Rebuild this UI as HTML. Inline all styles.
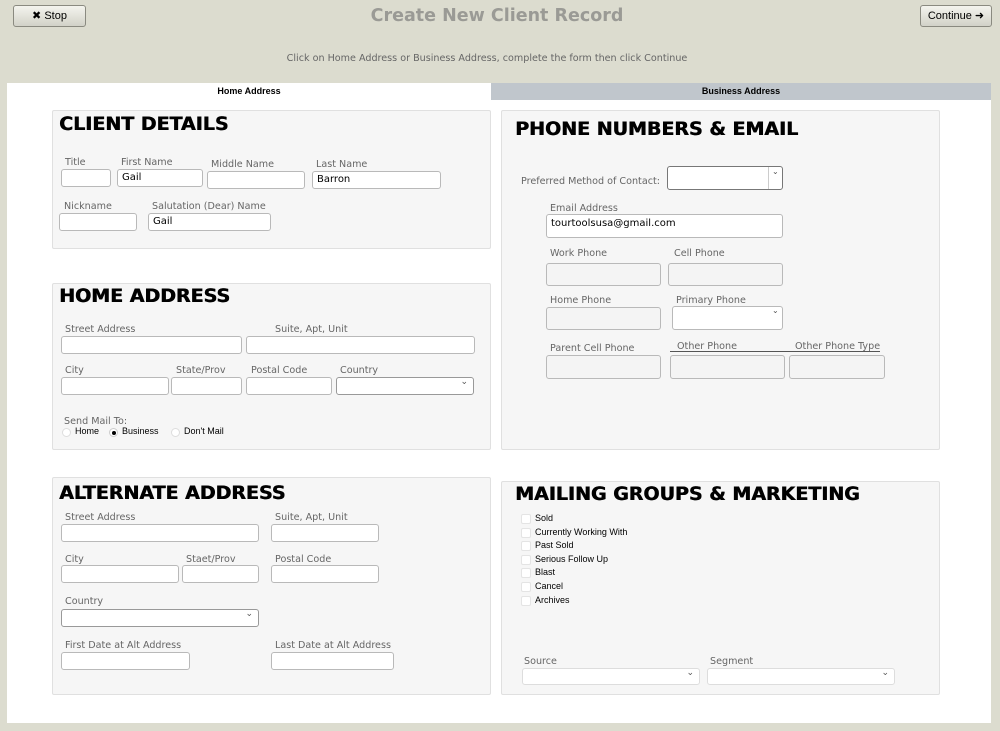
<!DOCTYPE html>
<html><head><meta charset="utf-8"><style>
*{box-sizing:border-box;margin:0;padding:0}
body{width:1000px;height:731px;background:#dcdccf;position:relative;overflow:hidden;font-family:"DejaVu Sans","Liberation Sans",sans-serif}
div,span{position:absolute}
.btn{border:1px solid #8a8a80;border-radius:3px;background:linear-gradient(#f4f4ee,#d2d2c8);font:11px "Liberation Sans",sans-serif;color:#000;text-align:center;line-height:20px}
.wh{left:7px;top:83px;width:984px;height:640px;background:#fff}
.tab2{left:491px;top:83px;width:500px;height:17px;background:#c0c6cc;font:bold 9px "Liberation Sans",sans-serif;text-align:center;line-height:17px}
.tab1{left:7px;top:83px;width:484px;height:17px;font:bold 9px "Liberation Sans",sans-serif;text-align:center;line-height:17px}
.p{background:#f6f6f6;border:1px solid #e0e0e0;border-radius:2px}
.h{font:bold 19px "DejaVu Sans",sans-serif;color:#000;white-space:nowrap;margin-top:1px;text-shadow:0.6px 0 0 #000}
.l{font-size:9.6px;color:#666;white-space:nowrap;margin-top:3px}
.i{background:#fff;border:1px solid #b9b9b9;border-radius:3px;font:10px "DejaVu Sans",sans-serif;color:#000;padding-left:4px;line-height:16px}
.g{background:#f4f4f4}
.s::after{content:"\2304";position:absolute;right:5px;top:-4px;font-size:9px;color:#555}
.c{font:9px "Liberation Sans",sans-serif;color:#000;white-space:nowrap}
.cb{width:10px;height:10px;background:#fff;border:1px solid #e4e4e4;border-radius:2px}
.r{width:9px;height:9px;border-radius:50%;background:#fff;border:1px solid #ddd}
</style></head><body>
<div class="btn" style="left:13px;top:5px;width:73px;height:22px">✖ Stop</div>
<div class="btn" style="left:920px;top:5px;width:72px;height:22px">Continue ➜</div>
<div style="left:300px;top:6px;width:394px;text-align:center;font:bold 17.5px 'DejaVu Sans',sans-serif;color:#9a9a95">Create New Client Record</div>
<div style="left:200px;top:53px;width:574px;text-align:center;font-size:9.6px;color:#666">Click on Home Address or Business Address, complete the form then click Continue</div>
<div class="wh"></div>
<div class="tab1">Home Address</div>
<div class="tab2">Business Address</div>

<!-- client details -->
<div class="p" style="left:52px;top:110px;width:439px;height:139px"></div>
<div class="h" style="left:59px;top:112px">CLIENT DETAILS</div>
<div class="l" style="left:65px;top:154px">Title</div>
<div class="l" style="left:121px;top:154px">First Name</div>
<div class="l" style="left:211px;top:156px">Middle Name</div>
<div class="l" style="left:316px;top:156px">Last Name</div>
<div class="i" style="left:61px;top:169px;width:50px;height:18px"></div>
<div class="i" style="left:117px;top:169px;width:86px;height:18px">Gail</div>
<div class="i" style="left:207px;top:171px;width:98px;height:18px"></div>
<div class="i" style="left:312px;top:171px;width:129px;height:18px">Barron</div>
<div class="l" style="left:64px;top:198px">Nickname</div>
<div class="l" style="left:152px;top:198px">Salutation (Dear) Name</div>
<div class="i" style="left:59px;top:213px;width:78px;height:18px"></div>
<div class="i" style="left:148px;top:213px;width:123px;height:18px">Gail</div>

<!-- home address -->
<div class="p" style="left:52px;top:283px;width:439px;height:167px"></div>
<div class="h" style="left:59px;top:284px">HOME ADDRESS</div>
<div class="l" style="left:65px;top:321px">Street Address</div>
<div class="l" style="left:275px;top:321px">Suite, Apt, Unit</div>
<div class="i" style="left:61px;top:336px;width:181px;height:18px"></div>
<div class="i" style="left:246px;top:336px;width:229px;height:18px"></div>
<div class="l" style="left:65px;top:362px">City</div>
<div class="l" style="left:176px;top:362px">State/Prov</div>
<div class="l" style="left:251px;top:362px">Postal Code</div>
<div class="l" style="left:340px;top:362px">Country</div>
<div class="i" style="left:61px;top:377px;width:108px;height:18px"></div>
<div class="i" style="left:171px;top:377px;width:71px;height:18px"></div>
<div class="i" style="left:246px;top:377px;width:86px;height:18px"></div>
<div class="i s" style="left:336px;top:377px;width:138px;height:18px;border-color:#999"></div>
<div class="l" style="left:64px;top:413px">Send Mail To:</div>
<div class="r" style="left:62px;top:428px"></div><div class="c" style="left:75px;top:426px">Home</div>
<div class="r" style="left:109px;top:428px;border-color:#ccc"></div><div style="left:112px;top:431px;width:4px;height:4px;border-radius:50%;background:#000"></div><div class="c" style="left:122px;top:426px">Business</div>
<div class="r" style="left:171px;top:428px"></div><div class="c" style="left:184px;top:426px">Don't Mail</div>

<!-- alternate -->
<div class="p" style="left:52px;top:477px;width:439px;height:218px"></div>
<div class="h" style="left:59px;top:481px">ALTERNATE ADDRESS</div>
<div class="l" style="left:65px;top:509px">Street Address</div>
<div class="l" style="left:275px;top:509px">Suite, Apt, Unit</div>
<div class="i" style="left:61px;top:524px;width:198px;height:18px"></div>
<div class="i" style="left:271px;top:524px;width:108px;height:18px"></div>
<div class="l" style="left:65px;top:551px">City</div>
<div class="l" style="left:186px;top:551px">Staet/Prov</div>
<div class="l" style="left:275px;top:551px">Postal Code</div>
<div class="i" style="left:61px;top:565px;width:118px;height:18px"></div>
<div class="i" style="left:182px;top:565px;width:77px;height:18px"></div>
<div class="i" style="left:271px;top:565px;width:108px;height:18px"></div>
<div class="l" style="left:65px;top:593px">Country</div>
<div class="i s" style="left:61px;top:609px;width:198px;height:18px;border-color:#999"></div>
<div class="l" style="left:65px;top:637px">First Date at Alt Address</div>
<div class="l" style="left:275px;top:637px">Last Date at Alt Address</div>
<div class="i" style="left:61px;top:652px;width:129px;height:18px"></div>
<div class="i" style="left:271px;top:652px;width:123px;height:18px"></div>

<!-- phone -->
<div class="p" style="left:501px;top:110px;width:439px;height:340px"></div>
<div class="h" style="left:515px;top:117px">PHONE NUMBERS &amp; EMAIL</div>
<div class="l" style="left:521px;top:173px">Preferred Method of Contact:</div>
<div class="i" style="left:667px;top:166px;width:116px;height:24px;border-color:#777"></div>
<div style="left:768px;top:167px;width:1px;height:22px;background:#ccc"></div>
<div style="left:772px;top:167px;font-size:8px;color:#555">⌄</div>
<div class="l" style="left:550px;top:200px">Email Address</div>
<div class="i" style="left:546px;top:214px;width:237px;height:24px;line-height:17px;font-size:10px">tourtoolsusa@gmail.com</div>
<div class="l" style="left:550px;top:245px">Work Phone</div>
<div class="l" style="left:674px;top:245px">Cell Phone</div>
<div class="i g" style="left:546px;top:263px;width:115px;height:23px"></div>
<div class="i g" style="left:668px;top:263px;width:115px;height:23px"></div>
<div class="l" style="left:550px;top:292px">Home Phone</div>
<div class="l" style="left:676px;top:292px">Primary Phone</div>
<div class="i g" style="left:546px;top:307px;width:115px;height:23px"></div>
<div class="i" style="left:672px;top:306px;width:111px;height:24px"></div>
<div style="left:772px;top:306px;font-size:8px;color:#555">⌄</div>
<div class="l" style="left:550px;top:340px">Parent Cell Phone</div>
<div class="l" style="left:677px;top:338px">Other Phone</div>
<div class="l" style="left:795px;top:338px">Other Phone Type</div>
<div style="left:670px;top:351px;width:210px;height:1px;background:#555"></div>
<div class="i g" style="left:546px;top:355px;width:115px;height:24px"></div>
<div class="i g" style="left:670px;top:355px;width:115px;height:24px"></div>
<div class="i g" style="left:789px;top:355px;width:96px;height:24px"></div>

<!-- mailing -->
<div class="p" style="left:501px;top:481px;width:439px;height:214px"></div>
<div class="h" style="left:515px;top:482px">MAILING GROUPS &amp; MARKETING</div>
<div class="cb" style="left:521px;top:514px"></div><div class="c" style="left:535px;top:513px">Sold</div>
<div class="cb" style="left:521px;top:528px"></div><div class="c" style="left:535px;top:527px">Currently Working With</div>
<div class="cb" style="left:521px;top:541px"></div><div class="c" style="left:535px;top:540px">Past Sold</div>
<div class="cb" style="left:521px;top:555px"></div><div class="c" style="left:535px;top:554px">Serious Follow Up</div>
<div class="cb" style="left:521px;top:568px"></div><div class="c" style="left:535px;top:567px">Blast</div>
<div class="cb" style="left:521px;top:582px"></div><div class="c" style="left:535px;top:581px">Cancel</div>
<div class="cb" style="left:521px;top:596px"></div><div class="c" style="left:535px;top:595px">Archives</div>
<div class="l" style="left:524px;top:653px">Source</div>
<div class="l" style="left:710px;top:653px">Segment</div>
<div class="i s" style="left:522px;top:668px;width:178px;height:17px;border-color:#ddd"></div>
<div class="i s" style="left:707px;top:668px;width:188px;height:17px;border-color:#ddd"></div>
</body></html>
